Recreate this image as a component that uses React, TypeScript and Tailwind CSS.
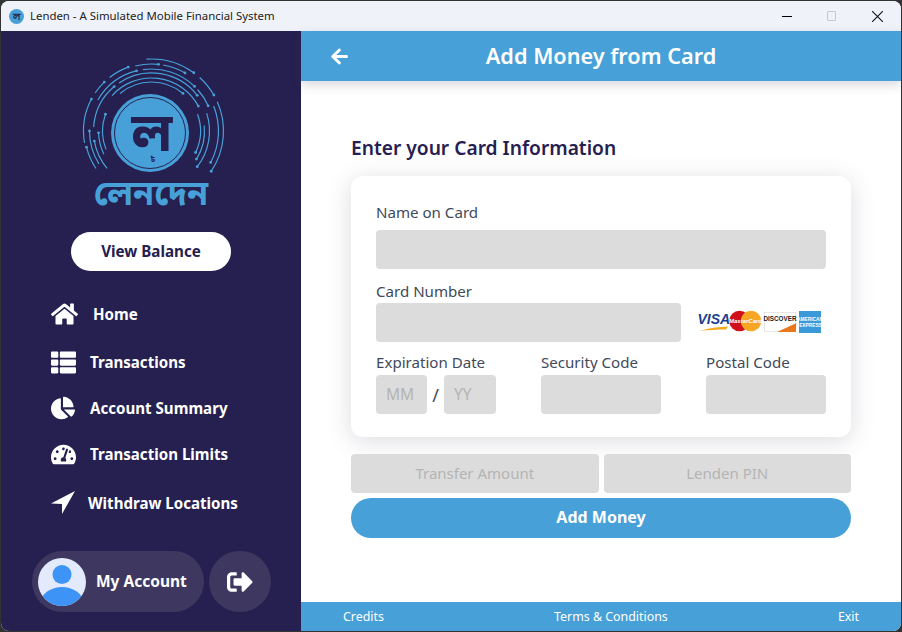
import { FaArrowLeft, FaChartPie, FaHome, FaSignOutAlt, FaTachometerAlt, FaThList } from 'react-icons/fa';

const font = "font-['Noto_Sans','Open_Sans',sans-serif]";

const NavArrow = ({ className }: { className?: string }) => (
  <svg viewBox="0 0 24 24" fill="currentColor" className={className}>
    <path d="M24 0 0 12.500 11 13 11 23z" />
  </svg>
);

const navItems = [
  { label: 'Home', icon: FaHome, iconCls: 'w-[27px] h-[24px]', gap: 'mr-[15px]', row: 'mt-[31px]' },
  { label: 'Transactions', icon: FaThList, iconCls: 'w-[25px] h-[25px]', gap: 'mr-[14px]', row: 'mt-[24px]' },
  { label: 'Account Summary', icon: FaChartPie, iconCls: 'w-[24px] h-[24px]', gap: 'mr-[15px]', row: 'mt-[22px]' },
  { label: 'Transaction Limits', icon: FaTachometerAlt, iconCls: 'w-[25px] h-[25px]', gap: 'mr-[14px]', row: 'mt-[22px]' },
  { label: 'Withdraw Locations', icon: NavArrow, iconCls: 'w-[24px] h-[24px]', gap: 'mr-[13px]', row: 'mt-[25px]' },
];

const cx = 76.5;
const cy = 76;
const pt = (r: number, deg: number) => {
  const a = (deg * Math.PI) / 180;
  return [cx + r * Math.sin(a), cy - r * Math.cos(a)];
};
const arc = (r: number, a: number, b: number) => {
  const [x1, y1] = pt(r, a);
  const [x2, y2] = pt(r, b);
  return `M${x1} ${y1}A${r} ${r} 0 ${b - a > 180 ? 1 : 0} 1 ${x2} ${y2}`;
};

// radius, start angle, end angle (clockwise from 12 o'clock)
const circuit = [
  [72, -4, 36], [72, 42, 60], [72, 66, 124], [68, -100, -62], [68, -56, -44], [68, -38, -20],
  [67, -124, -104], [67, 10, 30], [67, -14, 6], [67, 68, 118],
  [62, -60, -14], [62, -8, 44], [62, 48, 66], [62, -122, -90],
  [58, -86, -40], [58, -34, 52], [58, 72, 128], [58, -130, -100],
  [53, -48, 62], [53, 84, 122], [53, -116, -92],
  [49, -40, 40], [49, 70, 116], [49, -112, -70],
];

const Logo = () => (
  <svg viewBox="0 0 150 150" className="w-[150px] h-[150px] shrink-0 overflow-visible">
    <g stroke="#47a0d7" strokeWidth="1.200" fill="none">
      {circuit.map(([r, a, b]) => (
        <path key={`${r}${a}`} d={arc(r, a, b)} />
      ))}
    </g>
    <g fill="#47a0d7">
      {circuit.map(([r, a, b]) => {
        const [x, y] = pt(r, b);
        return <circle key={`${r}${a}`} cx={x} cy={y} r="1.400" />;
      })}
    </g>
    <circle cx="75" cy="78" r="39" fill="#47a0d7" />
    <circle cx="75" cy="78" r="35.500" fill="none" stroke="#262050" strokeWidth="1" />
    <text x="77" y="96" textAnchor="middle" fontFamily="Noto Sans Bengali, Noto Sans, sans-serif" fontWeight="700" fontSize="54" fill="#262050">ল</text>
    <text x="78" y="107" textAnchor="middle" fontFamily="Noto Sans Bengali, Noto Sans, sans-serif" fontWeight="700" fontSize="8" fill="#262050">৳</text>
  </svg>
);

const AvatarIcon = () => (
  <svg viewBox="0 0 48 48" className="w-[48px] h-[48px] rounded-full shrink-0">
    <rect width="48" height="48" fill="#e3eafc" />
    <circle cx="24" cy="16.500" r="9.500" fill="#3d94f6" />
    <ellipse cx="24" cy="44" rx="21" ry="15" fill="#3d94f6" />
  </svg>
);

const CardLogos = () => (
  <svg viewBox="0 0 126 26" className="w-[126px] h-[26px] shrink-0">
    <text x="0.500" y="14" fontFamily="Liberation Sans" fontWeight="700" fontStyle="italic" fontSize="14" fill="#1a3f8f">VISA</text>
    <path d="M3 21c9-3 18-4 28-4.500l-2 3c-9 0-18 .5-26 1.500z" fill="#f2a91e" />
    <circle cx="42.500" cy="11" r="10.300" fill="#d0111c" />
    <circle cx="54" cy="11" r="10.300" fill="#f6a623" />
    <text x="48.500" y="13" textAnchor="middle" fontFamily="Liberation Sans" fontWeight="700" fontStyle="italic" fontSize="6" fill="#fff">MasterCard</text>
    <rect x="67.300" y="2.300" width="31.500" height="19.500" fill="#fff" stroke="#d5d5d5" strokeWidth="0.600" />
    <text x="83" y="11" textAnchor="middle" fontFamily="Liberation Sans" fontWeight="700" fontSize="6.300" fill="#222">DISCOVER</text>
    <path d="M80 22 99 13.300V22z" fill="#e8781b" />
    <rect x="102" y="1" width="22" height="22" fill="#3a9ad9" />
    <text x="113" y="10.500" textAnchor="middle" fontFamily="Liberation Sans" fontWeight="700" fontSize="4.800" fill="#fff">AMERICAN</text>
    <text x="113.500" y="16.500" textAnchor="middle" fontFamily="Liberation Sans" fontWeight="700" fontSize="4.800" fill="#fff">EXPRESS</text>
  </svg>
);

const Field = ({ label, width }: { label: string; width: string }) => (
  <div className={`flex flex-col ${width}`}>
    <label className="text-[15.100px] leading-[20px] text-[#3f4a5a]">{label}</label>
    <div className="mt-[3px] h-[39px] rounded bg-[#dcdcdc]" />
  </div>
);

export default function App() {
  return (
    <div className="w-[902px] h-[632px] p-px bg-[#333333]">
      <div className={`w-full h-full flex flex-col overflow-hidden rounded-lg bg-white ${font}`}>
        <div className="h-[30px] shrink-0 flex items-center bg-[#f0f2f9]">
          <div className="ml-[8px] w-[15px] h-[15px] rounded-full bg-[#47a0d7] flex items-center justify-center text-[10px] leading-none font-bold text-[#262050]">ল</div>
          <span className="ml-[6px] text-[11.400px] text-[#222]">Lenden - A Simulated Mobile Financial System</span>
          <div className="ml-auto flex items-center">
            <div className="w-[10px] h-px bg-black mr-[35px]" />
            <div className="w-[9px] h-[10px] border border-[#c8c8c8] rounded-[1px] mr-[36px]" />
            <svg viewBox="0 0 10 10" className="w-[11px] h-[11px] mr-[18px]">
              <path d="M0 0 10 10M10 0 0 10" stroke="#111" strokeWidth="1" />
            </svg>
          </div>
        </div>

        <div className="flex flex-1 min-h-0">
          <aside className="w-[300px] shrink-0 bg-[#262050] flex flex-col">
            <div className="h-[201px] flex flex-col items-center overflow-visible">
              <div className="h-[150px] ml-[-3px] mt-[24px]"><Logo /></div>
              <div className="mt-[-26px] h-[36px] text-[34px] leading-[36px] font-bold text-[#47a0d7] font-['Noto_Sans_Bengali','Noto_Sans','sans-serif']">লেনদেন</div>
            </div>
            <button className="self-center w-[160px] h-[39px] rounded-full bg-white text-[#262050] text-[15.200px] font-bold">View Balance</button>

            <nav className="flex flex-col pl-[50px]">
              {navItems.map(({ label, icon: Icon, iconCls, gap, row }) => (
                <a key={label} className={`flex items-center h-[24px] text-white text-[15.100px] font-bold ${row}`}>
                  <Icon className={`${iconCls} ${gap} shrink-0`} />
                  {label}
                </a>
              ))}
            </nav>

            <div className="mt-[36px] pl-[31px] flex items-center gap-[5px]">
              <div className="w-[172px] h-[61px] rounded-full bg-[#3e3860] flex items-center pl-[6px]">
                <AvatarIcon />
                <span className="ml-[10px] text-[15.500px] font-bold text-white">My Account</span>
              </div>
              <div className="w-[62px] h-[61px] rounded-full bg-[#3e3860] flex items-center justify-center">
                <FaSignOutAlt className="w-[26px] h-[26px] text-white" />
              </div>
            </div>
          </aside>

          <main className="flex-1 flex flex-col min-w-0">
            <header className="relative h-[50px] shrink-0 bg-[#47a0d7] shadow-[0_4px_10px_rgba(60,60,90,0.2)] flex items-center justify-center">
              <FaArrowLeft className="absolute left-[29px] top-[16px] w-[19px] h-[19px] text-white" />
              <h1 className="text-[21.700px] font-semibold text-white">Add Money from Card</h1>
            </header>

            <div className="flex-1 px-[50px] pt-[53px]">
              <h2 className="text-[19.200px] leading-[28px] font-semibold text-[#262050]">Enter your Card Information</h2>
              <section className="mt-[14px] h-[261px] rounded-xl bg-white shadow-[0_4px_24px_rgba(60,60,90,0.18)] px-[25px] pt-[26px]">
                <label className="block text-[15.100px] leading-[20px] text-[#3f4a5a]">Name on Card</label>
                <div className="mt-[8px] h-[39px] rounded bg-[#dcdcdc]" />

                <label className="block mt-[12px] text-[15.100px] leading-[20px] text-[#3f4a5a]">Card Number</label>
                <div className="mt-[2px] flex items-center">
                  <div className="w-[305px] h-[39px] rounded bg-[#dcdcdc]" />
                  <div className="ml-[16px] flex"><CardLogos /></div>
                </div>

                <div className="mt-[10px] flex">
                  <div className="w-[165px] flex flex-col">
                    <label className="text-[15.100px] leading-[20px] text-[#3f4a5a]">Expiration Date</label>
                    <div className="mt-[3px] flex items-center">
                      <div className="w-[51px] h-[39px] rounded bg-[#dcdcdc] flex items-center pl-[10px] text-[15.500px] text-[#b4b4b4]">MM</div>
                      <span className="w-[17px] text-center text-[18px] leading-none text-[#3f4a5a]">/</span>
                      <div className="w-[52px] h-[39px] rounded bg-[#dcdcdc] flex items-center pl-[10px] text-[15.500px] text-[#b4b4b4]">YY</div>
                    </div>
                  </div>
                  <Field label="Security Code" width="w-[165px] pr-[45px]" />
                  <Field label="Postal Code" width="w-[120px]" />
                </div>
              </section>

              <div className="mt-[17px] flex gap-[5px]">
                <div className="flex-1 h-[39px] rounded bg-[#dcdcdc] flex items-center justify-center text-[15px] text-[#b4b4b4]">Transfer Amount</div>
                <div className="flex-1 h-[39px] rounded bg-[#dcdcdc] flex items-center justify-center text-[15px] text-[#b4b4b4]">Lenden PIN</div>
              </div>
              <button className="mt-[5px] w-full h-[40px] pb-[2px] rounded-full bg-[#47a0d7] text-white text-[16px] font-bold">Add Money</button>
            </div>

            <footer className="h-[29px] shrink-0 bg-[#47a0d7] flex items-center justify-between px-[42px] pt-[2px] text-[12.400px] text-white">
              <span>Credits</span>
              <span>Terms &amp; Conditions</span>
              <span>Exit</span>
            </footer>
          </main>
        </div>
      </div>
    </div>
  );
}
